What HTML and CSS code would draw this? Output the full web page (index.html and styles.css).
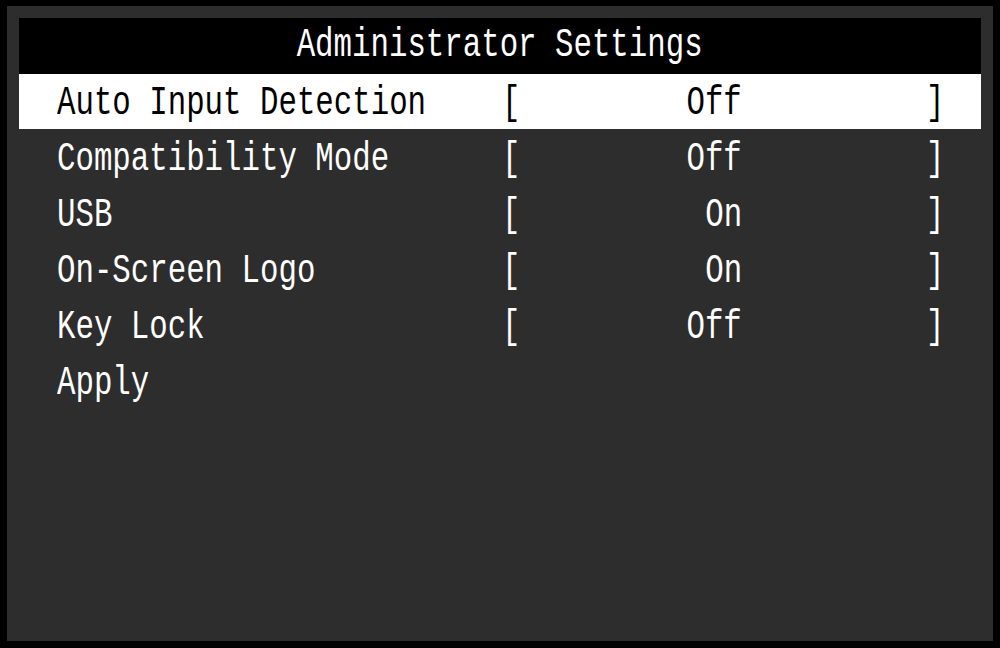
FILE: index.html
```html
<!DOCTYPE html>
<html lang="en">
<head>
<meta charset="utf-8">
<title>Administrator Settings</title>
<link rel="stylesheet" href="styles.css">
</head>
<body>
<div class="panel">
  <div class="title"><span class="txt txt-center">Administrator Settings</span></div>
  <div class="menu">
    <div class="row selected">
      <div class="label"><span class="txt">Auto Input Detection</span></div>
      <div class="br"><span class="txt">[</span></div>
      <div class="value"><span class="txt txt-right">Off</span></div>
      <div></div>
      <div class="br"><span class="txt">]</span></div>
    </div>
    <div class="row">
      <div class="label"><span class="txt">Compatibility Mode</span></div>
      <div class="br"><span class="txt">[</span></div>
      <div class="value"><span class="txt txt-right">Off</span></div>
      <div></div>
      <div class="br"><span class="txt">]</span></div>
    </div>
    <div class="row">
      <div class="label"><span class="txt">USB</span></div>
      <div class="br"><span class="txt">[</span></div>
      <div class="value"><span class="txt txt-right">On</span></div>
      <div></div>
      <div class="br"><span class="txt">]</span></div>
    </div>
    <div class="row">
      <div class="label"><span class="txt">On-Screen Logo</span></div>
      <div class="br"><span class="txt">[</span></div>
      <div class="value"><span class="txt txt-right">On</span></div>
      <div></div>
      <div class="br"><span class="txt">]</span></div>
    </div>
    <div class="row">
      <div class="label"><span class="txt">Key Lock</span></div>
      <div class="br"><span class="txt">[</span></div>
      <div class="value"><span class="txt txt-right">Off</span></div>
      <div></div>
      <div class="br"><span class="txt">]</span></div>
    </div>
    <div class="row">
      <div class="label"><span class="txt">Apply</span></div>
    </div>
  </div>
</div>
</body>
</html>
```

FILE: styles.css
```css
html, body {
  margin: 0;
  padding: 0;
  background: #000;
}
body {
  width: 1000px;
  height: 648px;
  overflow: hidden;
  font-family: "Liberation Mono", "DejaVu Sans Mono", monospace;
  font-size: 41px;
  color: #fff;
}
.panel {
  margin: 6px 7px 0 7px;
  width: 986px;
  height: 635px;
  box-sizing: border-box;
  padding: 12px 12px 0 12px;
  background: #2d2d2d;
}
.title {
  height: 56px;
  line-height: 54px;
  background: #000;
  text-align: center;
}
.txt {
  display: inline-block;
  white-space: pre;
  transform: scaleX(0.75);
  transform-origin: left center;
}
.txt-center {
  transform-origin: center center;
}
.txt-right {
  transform-origin: right center;
}
.menu {
  display: flex;
  flex-direction: column;
}
.row {
  display: grid;
  grid-template-columns: 445px 28px 212px 184px auto;
  height: 56px;
  line-height: 58px;
  padding-left: 38px;
  white-space: nowrap;
}
.row.selected {
  background: #fff;
  color: #000;
  height: 55px;
  margin-bottom: 1px;
}
.value {
  text-align: right;
}
```
